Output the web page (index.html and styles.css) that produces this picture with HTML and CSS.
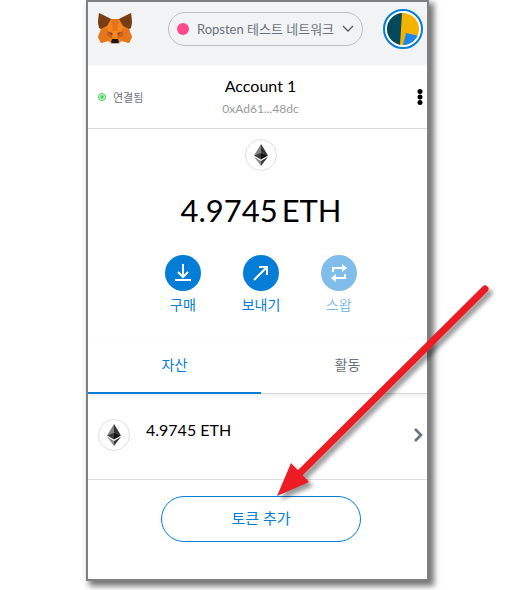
FILE: index.html
```
<!DOCTYPE html>
<html lang="ko">
<head>
    <meta charset="utf-8">
    <title>MetaMask</title>
    <link rel="stylesheet" href="styles.css">
</head>
<body>
<!-- Shared ethereum logo -->
<svg class="symbols" width="0" height="0" aria-hidden="true">
    <symbol id="eth" viewBox="0 0 14 22">
        <path fill="#828384" d="M7 0 0 11.5 7 8.4z"/>
        <path fill="#343434" d="M7 0v8.4l7 3.1z"/>
        <path fill="#3c3c3b" d="M0 11.5 7 15.6V8.4z"/>
        <path fill="#141414" d="M14 11.5 7 15.6V8.4z"/>
        <path fill="#8c8c8c" d="M0 12.8 7 22v-5.1z"/>
        <path fill="#3c3c3b" d="M14 12.8 7 22v-5.1z"/>
    </symbol>
</svg>
<main class="wallet">
    <div class="screen">
        <div class="content">
            <header class="app-header">
                <a href="#" class="logo" aria-label="MetaMask">
                    <svg width="34" height="32" viewBox="0 0 34 32">
                        <path fill="#f6851b" d="M1 0l12 6h8l12-6 1 10-3 7 3 7-3 6-7-2-4 3h-6l-4-3-7 2-3-6 3-7-3-7z"/>
                        <path fill="#763d16" d="M1 0l12 6-4 7-6 3-2-1-1-6zM33 0L21 6l4 7 6 3 2-1 1-6z"/>
                        <path fill="#e2761b" d="M13 6h8l-2 12h-4zM0 24l9-1 3 4-2 1-7 2zM34 24l-9-1-3 4 2 1 7 2z"/>
                        <path fill="#e4751f" d="M3 16l7-1-1 8-9 1zM31 16l-7-1 1 8 9 1z"/>
                        <path fill="#cd6116" d="M9 18l6 2-1 6-5-3zM25 18l-6 2 1 6 5-3z"/>
                        <path fill="#704b35" d="M10 19l4 1v2zM24 19l-4 1v2z"/>
                        <path fill="#c0ad9e" d="M13 27h8l-1 4h-6z"/>
                        <path fill="#161616" d="M14 26h6l1 3-1 1h-6l-1-1z"/>
                    </svg>
                </a>
                <button class="network">
                    <span class="network-dot"></span>
                    <span class="network-name">Ropsten 테스트 네트워크</span>
                    <svg width="12" height="8" viewBox="0 0 12 8" fill="none" stroke="#5b5e63" stroke-width="1.4"><path d="M1 1l5 5 5-5"/></svg>
                </button>
                <button class="avatar" aria-label="내 계정">
                    <svg width="32" height="32" viewBox="0 0 32 32">
                        <clipPath id="round"><circle cx="16" cy="16" r="16"/></clipPath>
                        <g clip-path="url(#round)">
                            <path fill="#f3b300" d="M0 0h32v32H0z"/>
                            <path fill="#03495e" d="M0 0h15l-2 32H0z"/>
                            <path fill="#1a87f1" d="M19 20l13 3v9H16z"/>
                        </g>
                    </svg>
                </button>
            </header>

            <section class="account-bar">
                <span class="connected"><span class="connected-dot"></span>연결됨</span>
                <button class="account">
                    <span class="account-name">Account 1</span>
                    <span class="account-address">0xAd61...48dc</span>
                </button>
                <button class="menu" aria-label="계정 옵션">
                    <svg width="6" height="16" viewBox="0 0 6 16"><circle cx="3" cy="2.5" r="2.5"/><circle cx="3" cy="8" r="2.5"/><circle cx="3" cy="13.5" r="2.5"/></svg>
                </button>
            </section>

            <section class="overview">
                <span class="token-icon"><svg width="14" height="22"><use href="#eth"/></svg></span>
                <h1 class="balance"><span>4.9745</span> <span>ETH</span></h1>
                <div class="actions">
                    <button class="action">
                        <span class="action-icon"><svg width="18" height="18" viewBox="0 0 18 18" fill="none" stroke="#fff" stroke-width="2"><path d="M9 0v12M4 8l5 5 5-5M1 16h16"/></svg></span>
                        구매
                    </button>
                    <button class="action">
                        <span class="action-icon"><svg width="18" height="18" viewBox="0 0 18 18" fill="none" stroke="#fff" stroke-width="2"><path d="M2 16L15 3M7 3h8v8"/></svg></span>
                        보내기
                    </button>
                    <button class="action" disabled>
                        <span class="action-icon"><svg width="18" height="18" viewBox="0 0 18 18" fill="none" stroke="#fff" stroke-width="2"><path d="M3 8V4h10M15 10v4H5"/><path fill="#fff" stroke="none" d="M12 0l5 4-5 4zM6 10l-5 4 5 4z"/></svg></span>
                        스왑
                    </button>
                </div>
            </section>

            <nav class="tabs">
                <a href="#" class="tab active">자산</a>
                <a href="#" class="tab">활동</a>
            </nav>

            <a href="#" class="asset">
                <span class="token-icon"><svg width="14" height="22"><use href="#eth"/></svg></span>
                <span class="asset-amount">4.9745 ETH</span>
                <svg width="10" height="14" viewBox="0 0 10 14" fill="none" stroke="#6a737d" stroke-width="2.6"><path d="M2 1l6 6-6 6"/></svg>
            </a>

            <div class="add-token">
                <button class="add-token-button">토큰 추가</button>
            </div>
        </div>
    </div>

    <!-- Arrow pointing at the add token button -->
    <svg class="pointer" width="220" height="220" viewBox="0 0 220 220" aria-hidden="true">
        <path d="M208 6L20 193" stroke="#ed1c24" stroke-width="7" stroke-linecap="round"/>
        <path d="M0 213l14-33 18 19z" fill="#ed1c24"/>
    </svg>
</main>
</body>
</html>
```

FILE: styles.css
```
* {
    box-sizing: border-box;
}

body {
    margin: 0;
    padding: 0 93px 9px 86px;
    background-color: #fff;
    font-family: Lato, "Noto Sans CJK KR", sans-serif;
    color: #000;
}

button {
    padding: 0;
    border: none;
    background: none;
    font-family: inherit;
    color: inherit;
    cursor: pointer;
}

a {
    color: inherit;
    text-decoration: none;
}

svg {
    display: block;
}

.symbols {
    position: absolute;
}

.wallet {
    position: relative;
    border: 2px solid #808080;
    background-color: #fff;
    box-shadow: 4px 4px 6px 1px rgba(0, 0, 0, 0.55);
}

/* The content runs a little under the right edge of the window */
.screen {
    overflow: hidden;
}

.content {
    margin-right: -7px;
}

/* Header */
.app-header {
    display: flex;
    justify-content: space-between;
    align-items: center;
    height: 63px;
    padding: 0 11px 10px 10px;
    background-color: #f2f3f4;
}

.network {
    display: flex;
    align-items: center;
    gap: 8px;
    height: 34px;
    margin-left: 16px;
    padding: 0 8px;
    border: 1px solid #bbc0c5;
    border-radius: 17px;
    font-size: 13px;
    line-height: 20px;
    color: #6a737d;
}

.network-dot {
    width: 12px;
    height: 12px;
    border-radius: 50%;
    background-color: #ff4a8d;
}

.avatar {
    padding: 2px;
    border: 2px solid #037dd6;
    border-radius: 50%;
    background-color: #fff;
}

/* Account */
.account-bar {
    display: grid;
    grid-template-columns: 1fr auto 1fr;
    align-items: center;
    height: 64px;
    padding: 0 11px 0 10px;
    border-bottom: 1px solid #d6d9dc;
}

.connected {
    display: flex;
    align-items: center;
    gap: 7px;
    font-size: 11px;
    color: #6a737d;
}

.connected-dot {
    width: 8px;
    height: 8px;
    border: 1px solid #4cd964;
    border-radius: 50%;
    background-color: #4cd964;
    box-shadow: inset 0 0 0 1px #fff;
}

.account {
    display: flex;
    flex-direction: column;
    align-items: center;
    gap: 4px;
}

.account-name {
    font-size: 16px;
    line-height: 20px;
}

.account-address {
    font-size: 12px;
    line-height: 18px;
    color: #989a9b;
}

.menu {
    justify-self: end;
}

/* Balance and actions */
.overview {
    display: flex;
    flex-direction: column;
    align-items: center;
    height: 209px;
    padding-top: 10px;
}

.token-icon {
    display: flex;
    justify-content: center;
    align-items: center;
    width: 32px;
    height: 32px;
    border: 1px solid #dedfe0;
    border-radius: 50%;
}

.balance {
    display: flex;
    gap: 4px;
    margin: 18px 0 24px;
    font-size: 31px;
    font-weight: normal;
    line-height: 42px;
}

.actions {
    display: flex;
    gap: 24px;
}

.action {
    display: flex;
    flex-direction: column;
    align-items: center;
    gap: 4px;
    width: 54px;
    font-size: 14px;
    line-height: 20px;
    color: #037dd6;
}

.action:disabled {
    opacity: 0.5;
    cursor: default;
}

.action-icon {
    display: flex;
    justify-content: center;
    align-items: center;
    width: 36px;
    height: 36px;
    border-radius: 50%;
    background-color: #037dd6;
}

/* Tabs */
.tabs {
    display: flex;
    height: 56px;
    border-top: 1px solid #fafafa;
    border-bottom: 1px solid #d6d9dc;
    box-shadow: 0 3px 4px rgba(0, 0, 0, 0.05);
}

.tab {
    flex: 1;
    height: 55px;
    padding-top: 16px;
    border-bottom: 2px solid transparent;
    font-size: 14px;
    line-height: 20px;
    text-align: center;
    color: #6a737d;
}

.tab.active {
    border-bottom-color: #037dd6;
    color: #037dd6;
}

/* Assets */
.asset {
    display: flex;
    align-items: center;
    gap: 16px;
    height: 86px;
    padding: 0 11px 4px 10px;
    border-bottom: 1px solid #dedfe0;
}

.asset-amount {
    flex: 1;
    padding-bottom: 10px;
    font-size: 16px;
    line-height: 20px;
}

.add-token {
    display: flex;
    justify-content: center;
    padding: 16px 0 37px;
}

.add-token-button {
    width: 200px;
    height: 46px;
    padding-bottom: 3px;
    border: 1px solid #037dd6;
    border-radius: 23px;
    font-size: 15px;
    color: #037dd6;
}

.pointer {
    position: absolute;
    right: -70px;
    bottom: 76px;
    filter: drop-shadow(4px 4px 2px rgba(0, 0, 0, 0.4));
}
```
